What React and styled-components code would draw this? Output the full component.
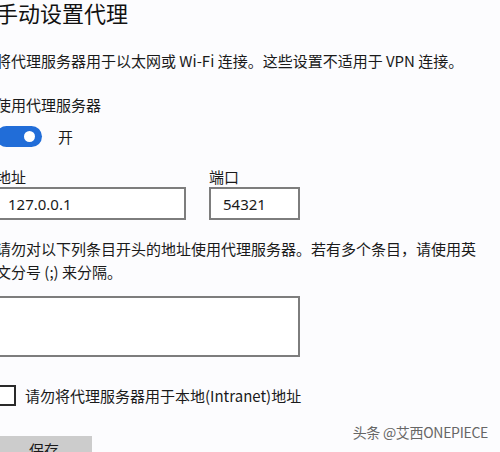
import React from "react";
import styled, { createGlobalStyle } from "styled-components";

const Global = createGlobalStyle`
  html, body { margin: 0; padding: 0; background: #fcfcfe; overflow: hidden; }
  body { width: 500px; height: 452px; }
  * { box-sizing: border-box; }
`;

const FONT = `"Noto Sans CJK SC", "Noto Sans", sans-serif`;

const Page = styled.div`
  position: relative;
  width: 500px;
  height: 452px;
  overflow: hidden;
  font-family: ${FONT};
  color: #1a1a1a;
`;

const Content = styled.div`
  display: flex;
  flex-direction: column;
  margin-left: -4px;
`;

const Title = styled.h1`
  margin: 0;
  font-size: 22px;
  line-height: 24px;
  font-weight: 400;
  color: #111;
`;

const Text = styled.p`
  margin: ${(p) => p.$mt || 0}px 0 0 0;
  font-size: 15px;
  line-height: ${(p) => p.$lh || 17}px;
  font-weight: 400;
  color: #1a1a1a;
  width: ${(p) => p.$w || "auto"};
`;

const ToggleRow = styled.div`
  display: flex;
  align-items: center;
  gap: 16px;
  margin-top: 13px;
`;

const Toggle = styled.div`
  width: 46px;
  height: 21px;
  border-radius: 11px;
  background: #216dd8;
  display: flex;
  align-items: center;
  justify-content: flex-end;
  padding-right: 7px;
`;

const Knob = styled.div`
  width: 11px;
  height: 11px;
  border-radius: 50%;
  background: #fff;
`;

const ToggleLabel = styled.span`
  font-size: 15px;
  line-height: 17px;
`;

const Fields = styled.div`
  display: flex;
  gap: 23px;
  margin-top: 21px;
`;

const Field = styled.div`
  display: flex;
  flex-direction: column;
  gap: 1px;
`;

const Label = styled.label`
  font-size: 15px;
  line-height: 18px;
`;

const Input = styled.div`
  width: ${(p) => p.$w}px;
  height: 33px;
  border: 2px solid #7d7d7d;
  background: #fff;
  display: flex;
  align-items: center;
  padding-left: ${(p) => p.$pl || 10}px;
  font-family: "Noto Sans", "Noto Sans CJK SC", sans-serif;
  font-size: 15px;
  color: #1a1a1a;
`;

const TextArea = styled.div`
  width: 304px;
  height: 61px;
  border: 2px solid #7d7d7d;
  background: #fff;
  margin-top: 13px;
`;

const CheckRow = styled.div`
  display: flex;
  align-items: center;
  gap: 9px;
  margin-top: 28px;
`;

const Box = styled.div`
  width: 20px;
  height: 21px;
  border: 2px solid #2a2a2a;
  background: #fff;
`;

const Button = styled.div`
  margin-top: 30px;
  width: 96px;
  height: 36px;
  background: #cccccc;
  display: flex;
  justify-content: center;
  padding-top: 5px;
  font-size: 15px;
  line-height: 17px;
`;

const Watermark = styled.div`
  position: absolute;
  right: 12px;
  bottom: 10px;
  font-family: "Noto Sans CJK SC", sans-serif;
  font-size: 14px;
  color: #666;
  text-shadow: 0 0 2px #fff;
  letter-spacing: -0.3px;
`;

export default function App() {
  return (
    <Page>
      <Global />
      <Content>
        <Title>手动设置代理</Title>
        <Text $mt={28}>将代理服务器用于以太网或 Wi-Fi 连接。这些设置不适用于 VPN 连接。</Text>
        <Text $mt={27}>使用代理服务器</Text>
        <ToggleRow>
          <Toggle>
            <Knob />
          </Toggle>
          <ToggleLabel>开</ToggleLabel>
        </ToggleRow>
        <Fields>
          <Field>
            <Label>地址</Label>
            <Input $w={190}>127.0.0.1</Input>
          </Field>
          <Field>
            <Label>端口</Label>
            <Input $w={91} $pl={12}>54321</Input>
          </Field>
        </Fields>
        <Text $mt={17} $lh={23} $w="488px">
          请勿对以下列条目开头的地址使用代理服务器。若有多个条目，请使用英文分号 (;) 来分隔。
        </Text>
        <TextArea />
        <CheckRow>
          <Box />
          <Text>请勿将代理服务器用于本地(Intranet)地址</Text>
        </CheckRow>
        <Button>保存</Button>
      </Content>
      <Watermark>头条 @艾西ONEPIECE</Watermark>
    </Page>
  );
}
